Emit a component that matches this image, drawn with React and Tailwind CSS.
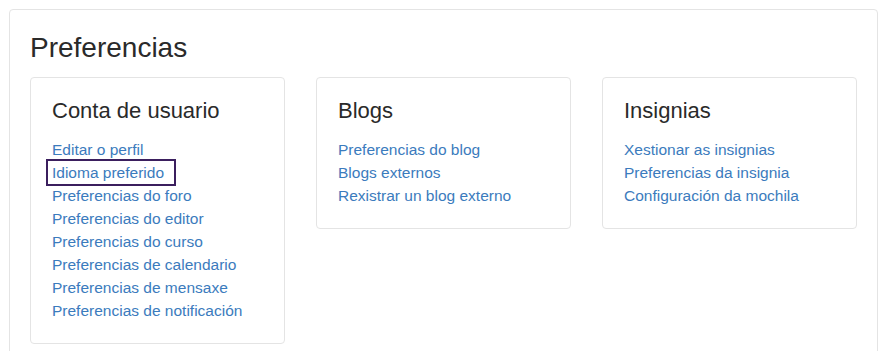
import React from "react";

const sections = [
  {
    title: "Conta de usuario",
    links: [
      "Editar o perfil",
      "Idioma preferido",
      "Preferencias do foro",
      "Preferencias do editor",
      "Preferencias do curso",
      "Preferencias de calendario",
      "Preferencias de mensaxe",
      "Preferencias de notificación",
    ],
  },
  {
    title: "Blogs",
    links: ["Preferencias do blog", "Blogs externos", "Rexistrar un blog externo"],
  },
  {
    title: "Insignias",
    links: ["Xestionar as insignias", "Preferencias da insignia", "Configuración da mochila"],
  },
];

const App = () => {
  return (
    <div
      className="min-h-screen bg-white pt-[9px] px-[9px] overflow-hidden"
      style={{ fontFamily: '"Liberation Sans", Arial, sans-serif' }}
    >
      <div className="border border-[#e4e4e4] rounded-[4px] px-[20px] pt-[21px] pb-6 w-[869px]">
        <h1 className="text-[28px] leading-[34px] font-light text-[#2a2a2a] mb-[12px]">Preferencias</h1>
        <div className="grid grid-cols-[255px_255px_255px] gap-[31px] items-start">
          {sections.map((s) => (
            <div key={s.title} className="border border-[#e4e4e4] rounded-[4px] px-[21px] pt-[19px] pb-[21px]">
              <h3 className="text-[22px] leading-[28px] font-light text-[#2a2a2a] mb-[13px]">{s.title}</h3>
              <ul>
                {s.links.map((l) => (
                  <li key={l} className="text-[15.5px] leading-[23px]">
                    {l === "Idioma preferido" ? (
                      <a className="inline-block -ml-[4px] pl-[4px] pr-[10px] ring-2 ring-[#3b1f5e] text-[#3b7bbd]">
                        {l}
                      </a>
                    ) : (
                      <a className="text-[#3b7bbd]">{l}</a>
                    )}
                  </li>
                ))}
              </ul>
            </div>
          ))}
        </div>
      </div>
    </div>
  );
};

export default App;
